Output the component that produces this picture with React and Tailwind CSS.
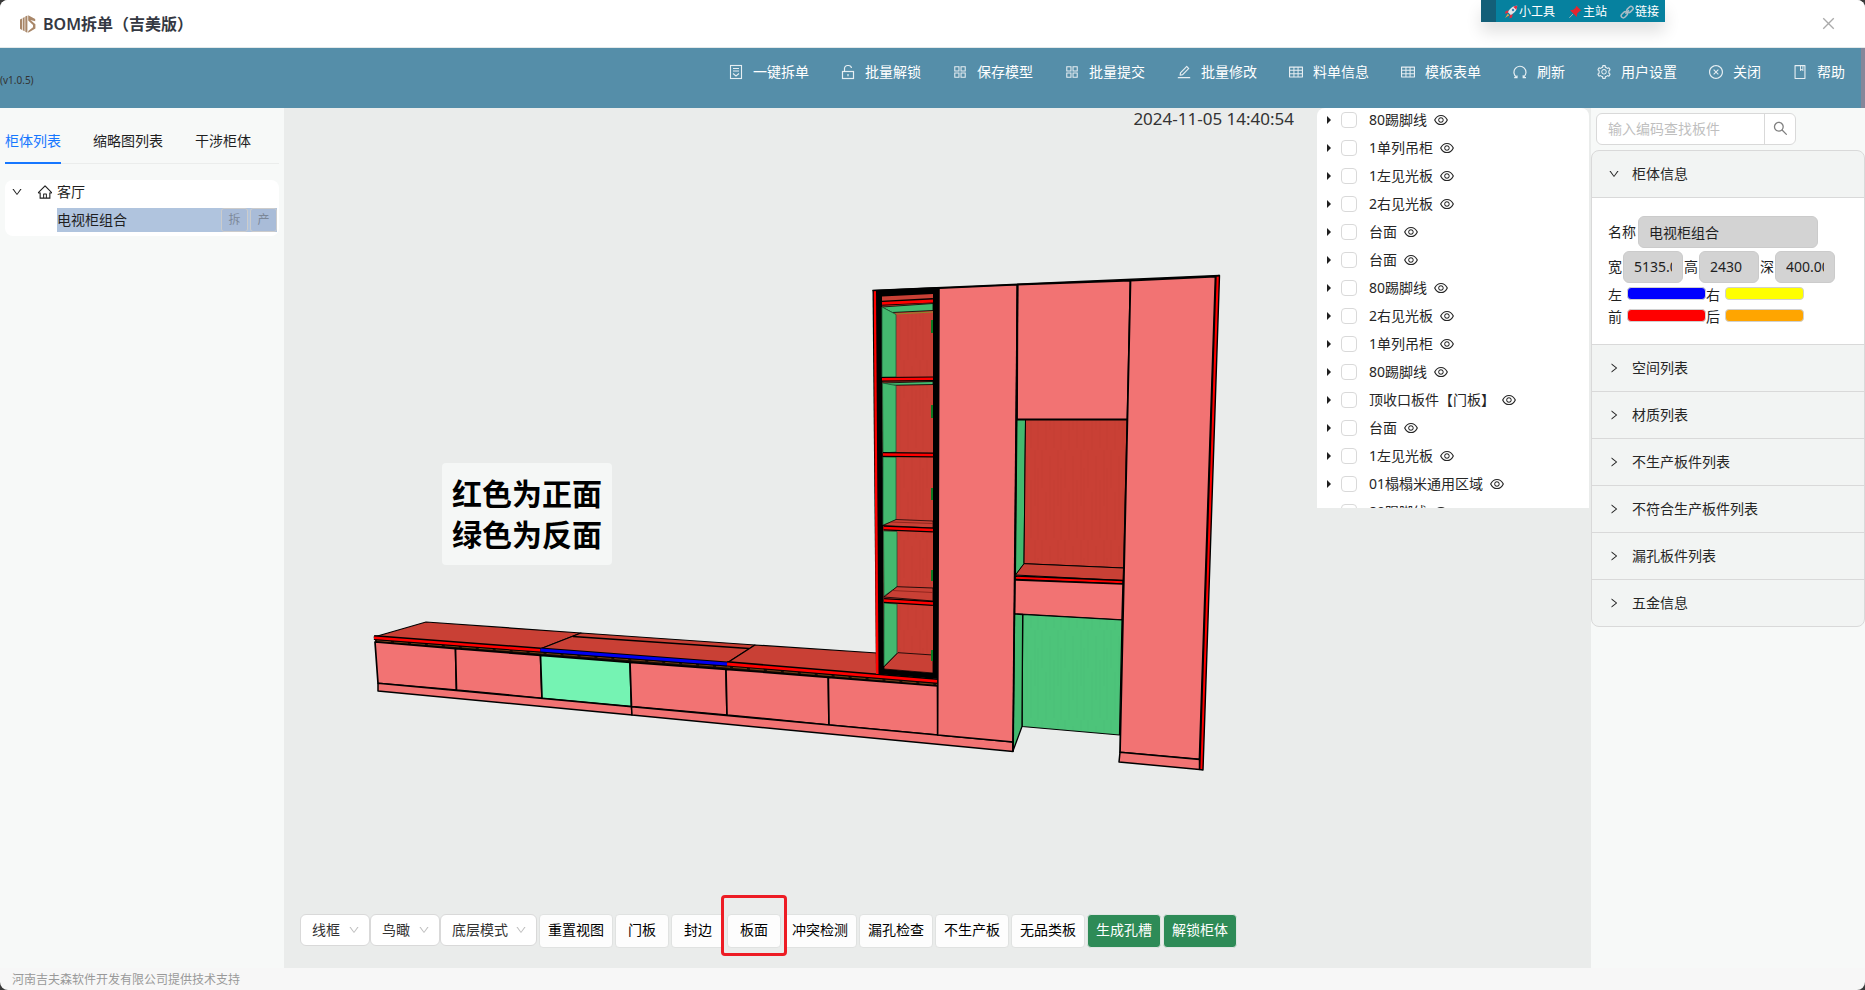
import React from "react";
import {
  AiOutlineAppstore,
  AiOutlineBook,
  AiOutlineClose,
  AiOutlineCloseCircle,
  AiOutlineDown,
  AiOutlineEdit,
  AiOutlineEye,
  AiOutlineHome,
  AiOutlineRight,
  AiOutlineSearch,
  AiOutlineSetting,
  AiOutlineTable,
} from "react-icons/ai";

function SplitIcon() {
  return (
    <svg viewBox="0 0 16 16" width="16" height="16" fill="none" stroke="currentColor" strokeWidth="1.1">
      <rect x="2.5" y="1.5" width="11" height="13" />
      <path d="M5 4.500h6M5 7h6" />
      <path d="M5 9.500l3 2.500 3-2.500" />
    </svg>
  );
}

function UnlockIcon() {
  return (
    <svg viewBox="0 0 16 16" width="16" height="16" fill="none" stroke="currentColor" strokeWidth="1.2">
      <rect x="2.500" y="7.500" width="11" height="7" />
      <path d="M4.500 7.500V4.500a3 3 0 0 1 3-3h1a3 3 0 0 1 3 2.500M8 10v2.200" />
    </svg>
  );
}

function RefreshIcon() {
  return (
    <svg viewBox="0 0 16 16" width="16" height="16" fill="none" stroke="currentColor" strokeWidth="1.2">
      <path d="M4.600 13.200A6 6 0 1 1 11.600 13" />
      <path d="M2.200 13.600h2.800v-2.200M14 13.600h-2.800v-2.400" />
    </svg>
  );
}

function Logo() {
  return (
    <svg viewBox="0 0 18 20" width="18" height="20" aria-hidden="true">
      <g fill="#a98769">
        <path d="M1 5.500 3 4.400V16L1 14.800Z" />
        <path d="M3.700 4 5.600 3V17.300L3.700 16.300Z" />
        <path d="M6.300 2.600 8.400 1.400V18.800L6.300 17.700Z" />
        <path d="M9.200 1.200 16.200 5V7.200L11.400 6 16.400 10.200V14.600L9.200 18.800V17L14 13.200V11L9.200 6.600Z" />
      </g>
    </svg>
  );
}

function RocketIcon() {
  return (
    <svg viewBox="0 0 14 14" width="14" height="14" aria-hidden="true">
      <path d="M5 5.200 1.800 6 .8 8.600 4 8.200ZM8.800 9 8 12.400l-2.600 1L5.800 10Z" fill="#dd2e44" />
      <path d="M13.200.8C9.500.8 6.200 2.800 4 7.200L6.800 10C11.200 7.800 13.200 4.500 13.200.8Z" fill="#dfe6ea" />
      <path d="M13.200.8c-1.400 0-2.800.3-4 .9l3.100 3.100c.6-1.200.9-2.600.9-4Z" fill="#dd2e44" />
      <circle cx="9" cy="5" r="1.200" fill="#3a7fb5" />
      <path d="M3.800 8.800 1 13l4.200-2.800Z" fill="#f9a03f" />
    </svg>
  );
}

function PinIcon() {
  return (
    <svg viewBox="0 0 14 14" width="14" height="14" aria-hidden="true">
      <path d="M5 9 1.400 12.800" stroke="#9fb3bd" strokeWidth="1" />
      <path d="M8.400.8 13.200 5.600 11.600 6.200 9.200 8.600 8.800 12 2 5.200 5.400 4.800 7.800 2.400Z" fill="#e4262f" />
    </svg>
  );
}

function LinkIcon() {
  return (
    <svg viewBox="0 0 14 14" width="14" height="14" fill="none" stroke="#a9bcc6" strokeWidth="1.500" aria-hidden="true">
      <rect x="6.500" y="2.300" width="7" height="4.200" rx="2.100" transform="rotate(-45 10 4.400)" />
      <rect x=".8" y="7.700" width="7" height="4.200" rx="2.100" transform="rotate(-45 4.300 9.800)" />
      <path d="M5.400 8.700 9 5.200" />
    </svg>
  );
}

const NAV = [
  ["一键拆单", SplitIcon],
  ["批量解锁", UnlockIcon],
  ["保存模型", AiOutlineAppstore],
  ["批量提交", AiOutlineAppstore],
  ["批量修改", AiOutlineEdit],
  ["料单信息", AiOutlineTable],
  ["模板表单", AiOutlineTable],
  ["刷新", RefreshIcon],
  ["用户设置", AiOutlineSetting],
  ["关闭", AiOutlineCloseCircle],
  ["帮助", AiOutlineBook],
];

const PARTS = [
  "80踢脚线",
  "1单列吊柜",
  "1左见光板",
  "2右见光板",
  "台面",
  "台面",
  "80踢脚线",
  "2右见光板",
  "1单列吊柜",
  "80踢脚线",
  "顶收口板件【门板】",
  "台面",
  "1左见光板",
  "01榻榻米通用区域",
  "80踢脚线",
];

const SECTIONS = ["空间列表", "材质列表", "不生产板件列表", "不符合生产板件列表", "漏孔板件列表", "五金信息"];

function QuickLinks() {
  return (
    <nav className="absolute top-0 right-[200px] flex h-[22px] text-xs text-white shadow-[0_10px_16px_rgba(0,0,0,0.12)]">
      <span className="w-[15px] bg-[#135f78]" />
      <span className="flex items-center gap-[13px] bg-[#06819f] pt-0.5 pr-1.5 pl-2">
        <a href="#tools" className="flex items-center gap-px"><RocketIcon />小工具</a>
        <a href="#main" className="flex items-center gap-px"><PinIcon />主站</a>
        <a href="#links" className="flex items-center gap-px"><LinkIcon />链接</a>
      </span>
    </nav>
  );
}

function Header() {
  return (
    <header className="relative flex h-12 shrink-0 items-center border-b border-[#e4e9e9] bg-white pl-[19px] pr-7">
      <Logo />
      <h1 className="ml-1.5 text-base font-semibold text-[#343842]">BOM拆单（吉美版）</h1>
      <button type="button" aria-label="关闭窗口" className="ml-auto text-[#aaaaaa]">
        <AiOutlineClose size={17} />
      </button>
      <QuickLinks />
    </header>
  );
}

function Toolbar() {
  return (
    <div className="flex h-[60px] shrink-0 border-r-4 border-[#85879a] bg-[#558ea9]">
      <span className="self-center pt-1 text-[10px] leading-4 text-[#333333]">(v1.0.5)</span>
      <div className="ml-auto flex h-12">
        {NAV.map(([label, Icon]) => (
          <button key={label} type="button" className="flex items-center gap-[9px] pr-4 pl-[15px] text-sm text-white">
            <span className="text-white/85"><Icon size={16} /></span>
            {label}
          </button>
        ))}
      </div>
    </div>
  );
}

const ROW_BUTTON = "h-6 w-[27px] rounded-[3px] border border-[#cccccc] bg-[#a9bcd8] text-xs text-[#7c8898]";

function LeftPanel() {
  return (
    <aside className="w-[284px] shrink-0 bg-[#f7f9f8] px-[5px] pt-2.5 text-sm text-[#1f1f1f]">
      <div role="tablist" className="flex gap-8 border-b border-[#ebedec]">
        <button type="button" role="tab" aria-selected="true" className="-mb-px border-b-2 border-[#1677ff] pt-3 pb-2.5 leading-[22px] text-[#1677ff]">柜体列表</button>
        <button type="button" role="tab" aria-selected="false" className="pt-3 pb-[11px] leading-[22px]">缩略图列表</button>
        <button type="button" role="tab" aria-selected="false" className="pt-3 pb-[11px] leading-[22px]">干涉柜体</button>
      </div>
      <div className="mt-4 rounded-lg bg-white pb-1">
        <div className="flex h-6 items-center">
          <button type="button" aria-label="收起" className="flex w-8 pl-1.5"><AiOutlineDown size={12} /></button>
          <AiOutlineHome size={16} />
          <span className="ml-1">客厅</span>
        </div>
        <div className="mt-1 mr-0.5 ml-[52px] flex h-6 items-center gap-0.5 bg-[#b0c4de]">
          <span className="flex-1">电视柜组合</span>
          <button type="button" className={ROW_BUTTON}>拆</button>
          <button type="button" className={ROW_BUTTON}>产</button>
        </div>
      </div>
    </aside>
  );
}

const PINK = "#f27373";
const BRICK = "#c94035";
const GREEN = "#44b96f";

function Poly({ p, fill, w = 1.2, stroke = "#000" }) {
  return <polygon points={p} fill={fill} stroke={stroke} strokeWidth={w} strokeLinejoin="round" />;
}

function Model() {
  return (
    <svg viewBox="285 108 1307 860" className="h-full w-full" role="img" aria-label="电视柜组合模型">
      <defs>
        <pattern id="grain" width="23" height="90" patternUnits="userSpaceOnUse">
          <path d="M1 0V56M4 18V90M8 0V38M12 42V90M16 6V70M20 30V88" stroke="#000" strokeOpacity=".025" strokeWidth="1" />
        </pattern>
      </defs>

      {/* low cabinet: worktop */}
      <Poly p="375,637 427,622 582,633 541,649" fill={BRICK} />
      <Poly p="541,649 582,633 756,645 728,663" fill={BRICK} />
      <path d="M574 636.500 750 648.500" stroke="#000" strokeWidth="1.500" />
      <Poly p="728,663 756,645 878,653 878,675" fill={BRICK} />
      <path d="M376 640.500 541.500 653 728 667 938.500 684.500" stroke="#1a0d05" strokeWidth="5" fill="none" />
      <path d="M378 640.700 541.500 653 728 667 938 684.500" stroke="#8a4a20" strokeWidth=".8" strokeDasharray="14 3" fill="none" />
      <path d="M375 637.500 541.500 650" stroke="#000" strokeWidth="5" />
      <path d="M375 637.800 541.500 650.300" stroke="#f00" strokeWidth="2.600" />
      <path d="M728 663.500 939 681" stroke="#000" strokeWidth="5" />
      <path d="M728 664 939 681.300" stroke="#f00" strokeWidth="2.800" />
      <path d="M541.500 650 728 664" stroke="#000" strokeWidth="5" />
      <path d="M541.500 650 728 664" stroke="#0000f0" strokeWidth="3.200" />

      {/* low cabinet: drawers and plinth */}
      <Poly p="376,642 456.500,648.700 457.500,690 379,683.300" fill={PINK} w={1.700} />
      <Poly p="456.500,648.700 541.500,655.300 543,698.300 457.500,690" fill={PINK} w={1.700} />
      <Poly p="541.500,655.300 631,662.300 632.500,706.700 543,698.300" fill="#75f3b3" w={1.700} />
      <Poly p="631,662.300 727,669.300 728,715 632.500,706.700" fill={PINK} w={1.700} />
      <Poly p="727,669.300 829.300,677.300 830,725 728,715" fill={PINK} w={1.700} />
      <Poly p="829.300,677.300 938.500,686 938.700,735 830,725" fill={PINK} w={1.700} />
      <Poly p="379,683.300 632.500,706.700 633,715 379,691" fill={PINK} w={1.500} />
      <Poly p="632.500,706.700 938.700,735 1014,742 1014,751.500 633,715" fill={PINK} w={1.500} />

      {/* tall cabinet: glass unit */}
      <polygon points="873.500,290 940.500,287 939.500,679 877,674" fill="#000" />
      <polygon points="874.800,291 877,291 879.500,674 877,674" fill="#f00" />
      <polygon points="883,296.500 934,294 934,673 885,669" fill={BRICK} />
      <polygon points="897,314 934,312 934,655 898,653" fill="url(#grain)" />
      <Poly p="883,307 934,303.500 934,310.500 893,312.500" fill={GREEN} w={0.800} />
      <path d="M897 314 934 312" stroke="#8a8a2a" strokeWidth="1" />
      <Poly p="883,307 897,314.500 897,372 897,377 883,377" fill={GREEN} w={0.800} stroke="#1d5c38" />
      <path d="M883 303.300 934 300.500" stroke="#000" strokeWidth="5" />
      <path d="M883 303.300 934 301" stroke="#f00" strokeWidth="2.800" />
      <Poly p="883.500,383 934,381.500 934,384.500 893,385.300" fill={GREEN} w={0.800} />
      <Poly p="883.500,383 897,385.500 897,452 884,453" fill={GREEN} w={0.800} stroke="#1d5c38" />
      <path d="M883 379.300 934 378.800" stroke="#000" strokeWidth="4.800" />
      <path d="M883 379.300 934 378.800" stroke="#f00" strokeWidth="2.600" />
      <Poly p="884,457 897,457 897,520 884,525" fill={GREEN} w={0.800} stroke="#1d5c38" />
      <path d="M884 454.500 934 455" stroke="#000" strokeWidth="4.800" />
      <path d="M884 454.500 934 455" stroke="#f00" strokeWidth="2.600" />
      <Poly p="884,525.500 897,519.500 934,521 934,528" fill={BRICK} w={0.700} />
      <path d="M892 522 934 523.500" stroke="#7a1a12" strokeWidth=".7" />
      <Poly p="884.500,531 898,531.500 898,587 885,596" fill={GREEN} w={0.800} stroke="#1d5c38" />
      <path d="M884.500 528 934 530" stroke="#000" strokeWidth="4.800" />
      <path d="M884.500 528 934 530" stroke="#f00" strokeWidth="2.600" />
      <Poly p="885,597 898,586.700 934,588 934,601" fill={BRICK} w={0.800} />
      <path d="M893 590.500 934 592.500" stroke="#7a1a12" strokeWidth=".7" />
      <Poly p="885,603 898,604 898,653 885,666" fill={GREEN} w={0.800} stroke="#1d5c38" />
      <path d="M885 600.500 934 603.500" stroke="#000" strokeWidth="4.800" />
      <path d="M885 600.500 934 603.500" stroke="#f00" strokeWidth="2.600" />
      <Poly p="885,667 899,652.700 934,655 934,673 885,669" fill={BRICK} w={0.800} />
      <path d="M933 320v13M933 405v13M933 488v12M933 570v11M933 650v11" stroke="#0b7a22" strokeWidth="2" />
      <polygon points="934,288 940.500,287.500 939,679 934,676" fill="#000" />

      {/* tall cabinet: doors */}
      <Poly p="940,288.300 1018.500,284.700 1014.500,742 938.700,735" fill={PINK} w={1.500} />
      <Poly p="1018.500,284.700 1131.500,280.500 1128.500,419.500 1018,419.500" fill={PINK} w={1.800} />

      {/* open niche */}
      <Poly p="1018,420 1026.500,420 1025,563.700 1016.500,575" fill={GREEN} w={1} />
      <Poly p="1026.500,420 1128,420 1124.500,568 1025,563.700" fill={BRICK} w={1} />
      <polygon points="1026.500,420 1128,420 1124.500,568 1025,563.700" fill="url(#grain)" />
      <Poly p="1016.500,575 1025,563.700 1124.500,568 1124,580.500" fill={BRICK} w={1} />
      <Poly p="1016,576 1124,580.500 1124,584 1016,579.500" fill="#f00" w={1.500} />
      <Poly p="1016,580 1124,584 1123,620 1015.500,614" fill={PINK} w={1.500} />
      <Poly p="1023.700,614.500 1123,620 1120.500,735 1023,726.500" fill="#4dc47a" w={1.200} />
      <polygon points="1023.700,614.500 1123,620 1120.500,735 1023,726.500" fill="url(#grain)" />
      <Poly p="1015.500,614 1023.700,614.500 1023,726.500 1014,751" fill={GREEN} w={1.300} />
      <path d="M1018.500 284.700 1014 751.500" stroke="#000" strokeWidth="1.800" />

      {/* right door and side panel */}
      <Poly p="1131.500,280.500 1216.500,276.500 1200.500,759.500 1121,752.300" fill={PINK} w={1.800} />
      <Poly p="1121,752.300 1200.500,759.500 1200.500,769.500 1120,762" fill={PINK} w={1.500} />
      <Poly p="1217,276 1220.500,275.500 1204,770 1200.700,769.500" fill="#f00" w={1.400} />
      <path d="M873.500 290.500 1220.500 275.500" stroke="#000" strokeWidth="1.600" />
    </svg>
  );
}

function PartTree() {
  return (
    <div className="absolute top-0 right-0.5 h-[400px] w-[272px] overflow-hidden rounded-t-lg bg-white text-sm text-[#262626]">
      <ul>
        {PARTS.map((name, i) => (
          <li key={i} className="flex h-7 items-start">
            <label className="flex h-6 items-center">
              <svg viewBox="0 0 4 8" width="4" height="8" className="mr-2.5 ml-2.5"><path d="M0 0 4 4 0 8Z" fill="#1f1f1f" /></svg>
              <input type="checkbox" className="h-4 w-4 appearance-none rounded border border-[#d9d9d9] bg-white" />
              <span className="ml-3 pr-1.5">{name}</span>
            </label>
            <button type="button" aria-label="显示" className="flex h-6 items-center"><AiOutlineEye size={16} /></button>
          </li>
        ))}
      </ul>
    </div>
  );
}

function ViewSelect({ label, width }) {
  return (
    <div className={"relative " + width}>
      <select aria-label={label} className="h-8 w-full appearance-none rounded-md border border-[#d9d9d9] bg-white pl-[11px] text-sm text-[#333333]">
        <option>{label}</option>
      </select>
      <AiOutlineDown size={12} className="pointer-events-none absolute top-2.5 right-2.5 text-[#bfbfbf]" />
    </div>
  );
}

const TOOL = "h-[34px] rounded border border-[#e0e2e1] bg-[#fdfdfd] pb-0.5 text-sm text-black";
const TOOL_GREEN = "h-[34px] w-[74px] rounded border border-[#dfe6e2] bg-[#2e8b57] pb-0.5 text-sm text-white";

function ViewTools() {
  return (
    <div className="absolute bottom-5 left-4 flex items-start gap-0.5">
      <div className="flex">
        <ViewSelect label="线框" width="w-[70px]" />
        <ViewSelect label="鸟瞰" width="w-[70px]" />
        <ViewSelect label="底层模式" width="w-[97px]" />
      </div>
      <button type="button" className={TOOL + " w-[74px]"}>重置视图</button>
      <button type="button" className={TOOL + " w-[54px]"}>门板</button>
      <button type="button" className={TOOL + " w-[54px]"}>封边</button>
      <div className="relative z-10">
        <span className="pointer-events-none absolute -top-[19px] -right-1.5 -bottom-2 -left-1.5 rounded-sm border-3 border-[#ed1c24] bg-[#eaeceb]" />
        <button type="button" className={TOOL + " relative w-[54px]"}>板面</button>
      </div>
      <button type="button" className={TOOL + " w-[74px]"}>冲突检测</button>
      <button type="button" className={TOOL + " w-[74px]"}>漏孔检查</button>
      <button type="button" className={TOOL + " w-[74px]"}>不生产板</button>
      <button type="button" className={TOOL + " w-[74px]"}>无品类板</button>
      <button type="button" className={TOOL_GREEN}>生成孔槽</button>
      <button type="button" className={TOOL_GREEN}>解锁柜体</button>
    </div>
  );
}

function Viewport() {
  return (
    <main className="relative min-w-0 flex-1 overflow-hidden bg-[#eaeceb]">
      <Model />
      <time className="absolute top-0 right-[297px] text-[17px] leading-[22px] text-[#333333]">2024-11-05 14:40:54</time>
      <p className="absolute top-[355px] left-[158px] rounded-sm bg-[#f5f7f6] px-2.5 py-2.5 text-[30px] leading-[41px] font-bold text-black">
        红色为正面<br />绿色为反面
      </p>
      <PartTree />
      <ViewTools />
    </main>
  );
}

const FIELD = "h-8 rounded-md border border-[#cbcbcb] bg-[#d3d3d3] px-2.5 pb-px text-sm text-[#1f1f1f]";
const SWATCH = "mt-[3px] h-[13px] w-[79px] rounded border border-[#d0d0d0]";

function CabinetInfo() {
  return (
    <div className="h-[147px] border-t border-[#d9d9d9] bg-white px-4 pt-[18px] text-[#1f1f1f]">
      <label className="flex items-center gap-0.5">
        名称<input readOnly value="电视柜组合" className={FIELD + " w-[180px]"} />
      </label>
      <div className="mt-[3px] flex gap-px">
        <label className="flex items-center gap-px">宽<input readOnly value="5135.00" className={FIELD + " w-[60px]"} /></label>
        <label className="flex items-center gap-px">高<input readOnly value="2430" className={FIELD + " w-[60px]"} /></label>
        <label className="flex items-center gap-px">深<input readOnly value="400.00" className={FIELD + " w-[60px]"} /></label>
      </div>
      <div className="mt-px grid grid-cols-[98px_98px] leading-[22px]">
        <label className="flex gap-[5px]">左<input readOnly aria-label="左" className={SWATCH + " bg-[#0000ff]"} /></label>
        <label className="flex gap-[5px]">右<input readOnly aria-label="右" className={SWATCH + " bg-[#ffff00]"} /></label>
        <label className="flex gap-[5px]">前<input readOnly aria-label="前" className={SWATCH + " bg-[#ff0000]"} /></label>
        <label className="flex gap-[5px]">后<input readOnly aria-label="后" className={SWATCH + " bg-[#ffa500]"} /></label>
      </div>
    </div>
  );
}

function RightPanel() {
  return (
    <aside className="w-[274px] shrink-0 bg-[#f7f9f8] pt-[5px] text-sm text-[#262626]">
      <form className="ml-[5px] flex h-8 w-[200px] overflow-hidden rounded-md border border-[#d9d9d9] bg-white">
        <input type="search" aria-label="查找板件" placeholder="输入编码查找板件" className="w-[167px] px-[11px] placeholder:text-[#bfbfbf]" />
        <button type="button" aria-label="搜索" className="flex flex-1 items-center justify-center border-l border-[#d9d9d9] pb-0.5 text-[#808080]">
          <AiOutlineSearch size={17} />
        </button>
      </form>
      <div className="mt-[5px] overflow-hidden rounded-lg border border-[#d9d9d9] bg-[#f2f4f3]">
        <button type="button" aria-expanded="true" className="flex h-[46px] w-full items-center gap-3 pl-4">
          <AiOutlineDown size={12} />柜体信息
        </button>
        <CabinetInfo />
        {SECTIONS.map((name) => (
          <button key={name} type="button" aria-expanded="false" className="flex h-[47px] w-full items-center gap-3 border-t border-[#d9d9d9] pl-4">
            <AiOutlineRight size={12} />{name}
          </button>
        ))}
      </div>
    </aside>
  );
}

export default function App() {
  return (
    <div className="h-screen bg-[#3a3a3a]">
      <div className="flex h-full flex-col overflow-hidden rounded-lg bg-[#f7f7f7] font-['Noto_Sans','Noto_Sans_CJK_SC',sans-serif]">
        <Header />
        <Toolbar />
        <div className="flex min-h-0 flex-1">
          <LeftPanel />
          <Viewport />
          <RightPanel />
        </div>
        <footer className="h-[22px] shrink-0 pl-3 text-xs leading-6 text-[#999999]">河南吉夫森软件开发有限公司提供技术支持</footer>
      </div>
    </div>
  );
}
